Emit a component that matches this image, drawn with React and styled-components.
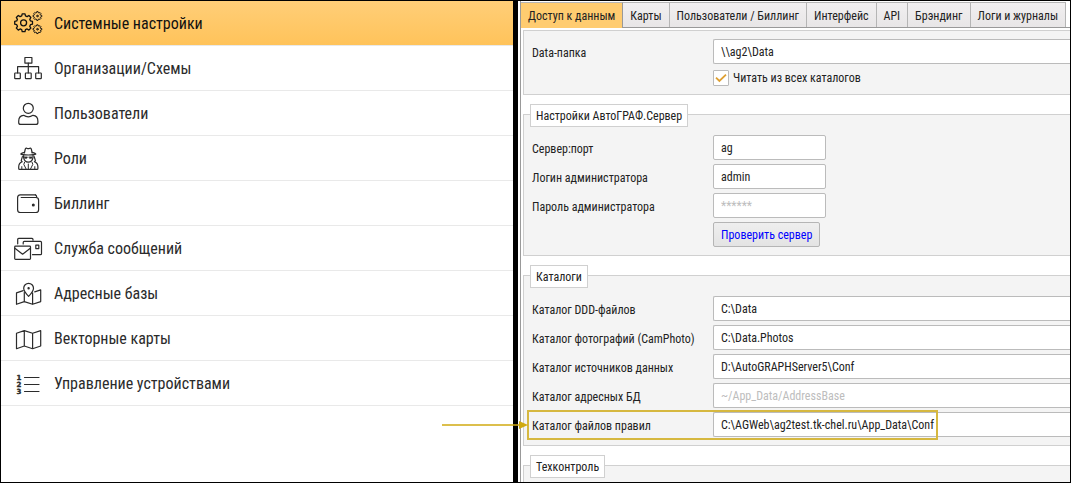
import React from "react";
import styled, { createGlobalStyle, css } from "styled-components";

const GlobalStyle = createGlobalStyle`
  *, *::before, *::after { box-sizing: border-box; }
  body { margin: 0; background: #fff; }
  body, button, input {
    font-family: "Roboto Condensed", Roboto, "Liberation Sans", sans-serif;
  }
`;

const Frame = styled.div`
  display: grid;
  grid-template-columns: minmax(0, 512fr) 5px minmax(0, 552fr);
  height: 100vh;
  border: 1px solid #000;
  overflow: hidden;
  background: #fff;
`;

const Divider = styled.div`
  background: #000;
`;

/* ---------- navigation ---------- */

const NavList = styled.ul`
  margin: 0;
  padding: 0;
  list-style: none;
`;

const NavLink = styled.a`
  display: flex;
  align-items: center;
  gap: 12px;
  height: 45px;
  padding-left: 13px;
  border-bottom: 1px solid #e9e9e9;
  font-size: 16px;
  line-height: 20px;
  color: #2b2b2b;
  text-decoration: none;
  ${(p) =>
    p.$active &&
    css`
      color: #111;
      background: linear-gradient(#ffce78, #ffc35a);
    `}
`;

const NavTitle = styled.span`
  padding-top: 1px;
`;

const Icon = styled.svg`
  flex: none;
  width: 28px;
  height: 24px;
  fill: none;
  stroke: currentColor;
  stroke-width: 1.2;
  stroke-linejoin: round;
  stroke-linecap: round;
  overflow: visible;
`;

const IconDigit = styled.text`
  font: bold 7px "DejaVu Sans", sans-serif;
  fill: currentColor;
  stroke: currentColor;
  stroke-width: 0.4;
`;

function gearPath(cx, cy, outer, inner) {
  const teeth = 8;
  const step = (Math.PI * 2) / teeth;
  const points = [];
  for (let i = 0; i < teeth; i++) {
    const a = i * step;
    [
      [-0.34, inner],
      [-0.2, outer],
      [0.2, outer],
      [0.34, inner],
    ].forEach(([k, r]) => {
      const t = a + k * step;
      points.push(`${(cx + r * Math.cos(t)).toFixed(2)} ${(cy + r * Math.sin(t)).toFixed(2)}`);
    });
  }
  return `M${points.join("L")}Z`;
}

const icons = {
  gears: (
    <>
      <path d={gearPath(9.6, 11.8, 9, 7.1)} strokeWidth="1.3" />
      <circle cx="9.6" cy="11.8" r="3" strokeWidth="1.3" />
      <path d={gearPath(23.4, 5, 4.4, 3.4)} strokeWidth="1" />
      <circle cx="23.4" cy="5" r="0.8" strokeWidth="1" />
      <path d={gearPath(23.4, 18.2, 4.4, 3.4)} strokeWidth="1" />
      <circle cx="23.4" cy="18.2" r="0.8" strokeWidth="1" />
    </>
  ),
  org: (
    <>
      <rect x="10.9" y="1.5" width="7" height="5.6" />
      <rect x="0.7" y="17" width="5.6" height="5.6" rx="0.6" />
      <rect x="11.4" y="17" width="5.8" height="5.6" rx="0.6" />
      <rect x="21.7" y="17" width="5.6" height="5.6" rx="0.6" />
      <path d="M14.3 7.1V17M3.6 17v-6.3h21v6.3" />
    </>
  ),
  user: (
    <>
      <circle cx="14.3" cy="7.3" r="5" />
      <path d="M9.6 14.3C6.4 14.5 4.7 17 4.7 20.2v1.2q0 2 2 2h15.2q2 0 2-2v-1.2c0-3.2-1.7-5.7-4.9-5.9q-4.7 3-9.4 0Z" />
    </>
  ),
  spy: (
    <>
      <path d="M10.4 7 11.3 3Q12 1.6 13.3 2.4q1 .6 2 0 1.3-.8 2 .6L18.2 7" />
      <path d="M10.4 6.4Q6.6 7.2 6.8 8q1 1 7.5 1t7.5-1q.2-.8-3.6-1.6" />
      <path d="M9.6 9.6v2q.9 4.6 4.7 4.6t4.7-4.6v-2" />
      <path d="M10.4 10.9h3l-.6 1.4h-1.8ZM15.2 10.9h3l-.6 1.4h-1.8Z" fill="currentColor" strokeWidth="0.7" />
      <path d="M8.4 10.6 7.2 14.6l1 1.2Q4.7 17 4.7 21v1.4q0 1 1 1h17.2q1 0 1-1V21q0-4-3.5-5.2l1-1.2-1.2-4" />
      <path d="m10.6 16.2-.8 2.2 2.4 4.8M18 16.2l.8 2.2-2.4 4.8M14.3 18v5M7.8 20.6v2.4M20.8 20.6v2.4" strokeWidth="1" />
    </>
  ),
  wallet: (
    <>
      <path d="M21.5 3.9H6.2Q3.6 3.9 3.6 6.7v12q0 2.8 2.8 2.8h15.4q2.8 0 2.8-2.8V9.3q0-2.8-2.8-2.8H7.2" />
      <path d="M21.5 3.9q1.3.6 1.2 2.5" />
      <circle cx="19.3" cy="14" r="0.9" fill="currentColor" />
    </>
  ),
  mail: (
    <>
      <path d="M3.7 7.8V3.4q0-1 1-1H18q1 0 1 1v.8" />
      <path d="M9.2 8V6.4q0-1 1-1h16.3q1 0 1 1v11.3q0 1-1 1h-8" />
      <rect x="21.8" y="9.2" width="3" height="3.4" />
      <rect x="0.7" y="10.2" width="15.8" height="13.2" rx="0.8" />
      <path d="m.9 12.2 7.7 6 7.7-6" />
    </>
  ),
  mapPin: (
    <>
      <path d="M14.6 15.3Q9.7 10.3 9.7 7.2a4.9 4.9 0 0 1 9.8 0q0 3.1-4.9 8.1Z" />
      <circle cx="14.6" cy="7.2" r="0.6" fill="currentColor" />
      <path d="m9.2 9.6-6.7 2.3v11.4l7.8-2.7 8.3 2.7 8.1-2.7V8.9l-6 2M10.3 11.4v9.2M18.6 11.8v11.5" />
    </>
  ),
  map: (
    <path d="m2.5 7.3 7.8-2.7 8.3 2.7 8.1-2.7V20l-8.1 2.7-8.3-2.7-7.8 2.7ZM10.3 4.6V20M18.6 7.3v15.4" />
  ),
  list: (
    <>
      <IconDigit x="2.6" y="9.4">1</IconDigit>
      <IconDigit x="2.6" y="16.4">2</IconDigit>
      <IconDigit x="2.6" y="23.4">3</IconDigit>
      <path d="M10.5 6.5H25M10.5 13.5H25M10.5 20.5H25" />
    </>
  ),
};

const navItems = [
  ["gears", "Системные настройки"],
  ["org", "Организации/Схемы"],
  ["user", "Пользователи"],
  ["spy", "Роли"],
  ["wallet", "Биллинг"],
  ["mail", "Служба сообщений"],
  ["mapPin", "Адресные базы"],
  ["map", "Векторные карты"],
  ["list", "Управление устройствами"],
];

/* ---------- settings ---------- */

const Settings = styled.main`
  display: flex;
  flex-direction: column;
  margin-left: 2px;
  padding-top: 1px;
  border-left: 1px solid #999;
`;

const TabBar = styled.div`
  display: flex;
  flex: none;
  height: 26px;
  border-bottom: 1px solid #999;
`;

const Tab = styled.button`
  flex: none;
  height: 25px;
  padding: 2px 7px 0;
  border: 0 solid #b5b5b5;
  border-width: 1px 1px 0 0;
  background: linear-gradient(#f1eff0, #e8e6e7);
  font-size: 12px;
  line-height: 16px;
  color: #222;
  white-space: nowrap;
  ${(p) =>
    p.$active &&
    css`
      height: 26px;
      padding-top: 0;
      background: #ffcc70;
      border-right-color: #999;
    `}
`;

const Form = styled.form`
  display: flex;
  flex-direction: column;
  gap: 19px;
  padding: 2px 0 0 2px;
`;

const Group = styled.section`
  display: flex;
  flex-direction: column;
  gap: 4px;
  padding: ${(p) => (p.$titled ? "0" : "8px")} 0 8px 8px;
  border: 1px solid #d0d0d0;
  border-right: 0;
  background: #f4f4f4;
`;

const GroupTitle = styled.h2`
  align-self: flex-start;
  height: 23px;
  margin: -11px 0 4px -2px;
  padding: 0 5px;
  border: 1px solid #d0d0d0;
  background: #fff;
  font-size: 12px;
  font-weight: 400;
  line-height: 22px;
  color: #222;
`;

const Row = styled.div`
  position: relative;
  display: grid;
  grid-template-columns: 181px minmax(0, 1fr);
  align-items: center;
`;

const Label = styled.label`
  padding-top: 3px;
  font-size: 12px;
  line-height: 16px;
  color: #222;
`;

const TextInput = styled.input`
  width: ${(p) => (p.$short ? "113px" : "100%")};
  height: 25px;
  padding: 1px 7px 0;
  border: 1px solid #bbb;
  border-right-width: ${(p) => (p.$short ? "1px" : "0")};
  border-radius: ${(p) => (p.$short ? "2px" : "2px 0 0 2px")};
  outline: 0;
  background: #fff;
  font-size: 12px;
  color: #222;
  &::placeholder { color: #bdbdbd; opacity: 1; }
`;

const CheckLabel = styled.label`
  grid-column: 2;
  display: flex;
  align-items: center;
  gap: 4px;
  height: 18px;
  padding-top: 2px;
  font-size: 12px;
  line-height: 16px;
  color: #222;
`;

const CheckBox = styled.span`
  display: grid;
  width: 16px;
  height: 16px;
  > * { grid-area: 1 / 1; }
`;

const CheckInput = styled.input`
  appearance: none;
  width: 16px;
  height: 16px;
  margin: 0;
  border: 1px solid #bbb;
  border-radius: 1px;
  background: #fff;
  &:not(:checked) + svg { visibility: hidden; }
`;

const CheckMark = styled.svg`
  width: 16px;
  height: 16px;
  fill: none;
  stroke: #dfa032;
  stroke-width: 1.8;
  pointer-events: none;
`;

const ActionButton = styled.button`
  grid-column: 2;
  justify-self: start;
  height: 25px;
  padding: 0 7px;
  border: 1px solid #b5b5b5;
  border-radius: 2px;
  background: linear-gradient(#efefef, #e3e3e3);
  font-size: 12px;
  line-height: 16px;
  color: #00f;
`;

const Highlight = styled.div`
  position: absolute;
  top: -2px;
  bottom: -3px;
  left: -5px;
  width: 411px;
  border: 2px solid #d6b840;
  pointer-events: none;
`;

const Arrow = styled.svg`
  position: absolute;
  top: 9px;
  right: 100%;
  width: 87px;
  height: 8px;
`;

function Field({ id, label, highlighted, ...input }) {
  return (
    <Row>
      <Label htmlFor={id}>{label}</Label>
      <TextInput id={id} type="text" {...input} />
      {highlighted && (
        <Highlight>
          <Arrow viewBox="0 0 87 8" aria-hidden="true">
            <path d="M0 4H80" stroke="#d0aa10" strokeWidth="1.4" />
            <path d="M77 0 86 4 77 8Z" fill="#d0aa10" />
          </Arrow>
        </Highlight>
      )}
    </Row>
  );
}

const tabs = [
  "Доступ к данным",
  "Карты",
  "Пользователи / Биллинг",
  "Интерфейс",
  "API",
  "Брэндинг",
  "Логи и журналы",
];

export default function App() {
  return (
    <>
      <GlobalStyle />
      <Frame>
        <nav>
          <NavList>
            {navItems.map(([icon, title], i) => (
              <li key={icon}>
                <NavLink href={`#${icon}`} $active={i === 0}>
                  <Icon viewBox="0 0 28 24" aria-hidden="true">{icons[icon]}</Icon>
                  <NavTitle>{title}</NavTitle>
                </NavLink>
              </li>
            ))}
          </NavList>
        </nav>
        <Divider />
        <Settings>
          <TabBar role="tablist">
            {tabs.map((title, i) => (
              <Tab key={title} type="button" role="tab" aria-selected={i === 0} $active={i === 0}>
                {title}
              </Tab>
            ))}
          </TabBar>
          <Form>
            <Group>
              <Field id="data" label="Data-папка" defaultValue="\\ag2\Data" />
              <Row>
                <CheckLabel>
                  <CheckBox>
                    <CheckInput type="checkbox" defaultChecked />
                    <CheckMark viewBox="0 0 16 16" aria-hidden="true">
                      <path d="M3 7.6 6.4 11 13 4.6" />
                    </CheckMark>
                  </CheckBox>
                  Читать из всех каталогов
                </CheckLabel>
              </Row>
            </Group>
            <Group $titled>
              <GroupTitle>Настройки АвтоГРАФ.Сервер</GroupTitle>
              <Field id="server" label="Сервер:порт" defaultValue="ag" $short />
              <Field id="login" label="Логин администратора" defaultValue="admin" $short />
              <Field id="password" label="Пароль администратора" placeholder="******" $short />
              <Row>
                <ActionButton type="button">Проверить сервер</ActionButton>
              </Row>
            </Group>
            <Group $titled>
              <GroupTitle>Каталоги</GroupTitle>
              <Field id="ddd" label="Каталог DDD-файлов" defaultValue="C:\Data" />
              <Field id="photos" label="Каталог фотографий (CamPhoto)" defaultValue="C:\Data.Photos" />
              <Field id="sources" label="Каталог источников данных" defaultValue="D:\AutoGRAPHServer5\Conf" />
              <Field id="addresses" label="Каталог адресных БД" placeholder="~/App_Data/AddressBase" />
              <Field id="rules" label="Каталог файлов правил" defaultValue="C:\AGWeb\ag2test.tk-chel.ru\App_Data\Conf" highlighted />
            </Group>
            <Group $titled>
              <GroupTitle>Техконтроль</GroupTitle>
            </Group>
          </Form>
        </Settings>
      </Frame>
    </>
  );
}
